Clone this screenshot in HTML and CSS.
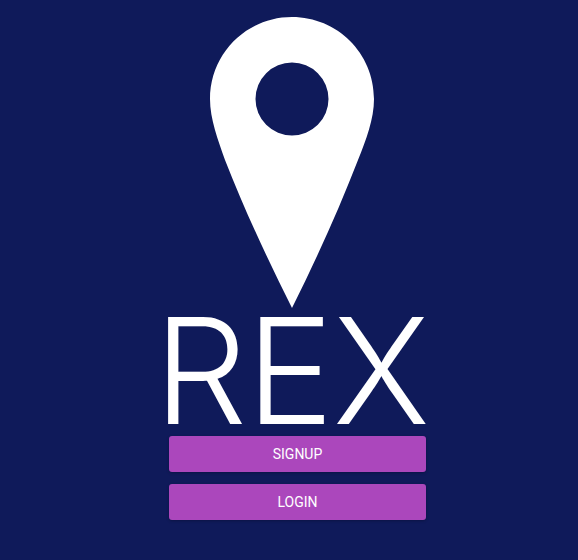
FILE: index.html
```html
<!DOCTYPE html>
<html lang="en">
<head>
  <meta charset="UTF-8">
  <meta name="viewport" content="width=device-width, initial-scale=1.0">
  <title>Rex</title>
  <link rel="stylesheet" href="styles.css">
</head>
<body>

<div class="container">
  <svg class="pin" width="164" height="291" viewBox="0 0 164 291">
    <path fill-rule="evenodd" fill="#ffffff" d="M82 0C127 0 164 36 164 82C164 102 156 123 148 143C129 192 106 243 82 291C58 243 34 192 15 143C8 123 0 102 0 82C0 36 37 0 82 0ZM82 45.500A36.500 36.500 0 1 0 82 118.500A36.500 36.500 0 1 0 82 45.500Z"/>
  </svg>

  <h1 class="logo">REX</h1>

  <button class="botao">SIGNUP</button>
  <button class="botao">LOGIN</button>
</div>

</body>
</html>
```

FILE: styles.css
```css
body {
  background: #0f1a5a;
  margin: 0;
  height: 560px;
  overflow: hidden;
  font-family: Inter, sans-serif;
}
.container {
  width: 257px;
  margin-left: 169px;
  padding-top: 17px;
  display: flex;
  flex-direction: column;
}
.pin {
  display: block;
  margin-left: 41px;
}
.logo {
  margin: 9px -20px 11px -15px;
  height: 108px;
  color: #ffffff;
  font-size: 147px;
  font-weight: 350;
  line-height: 108px;
  letter-spacing: -1px;
  white-space: nowrap;
}
.botao {
  height: 36px;
  margin-bottom: 12px;
  padding: 0;
  border: none;
  border-radius: 3px;
  background: #ab47bc;
  color: #ffffff;
  font-family: Roboto, sans-serif;
  font-size: 14px;
  box-shadow: 0 1px 3px rgba(0,0,0,0.25);
}
```
